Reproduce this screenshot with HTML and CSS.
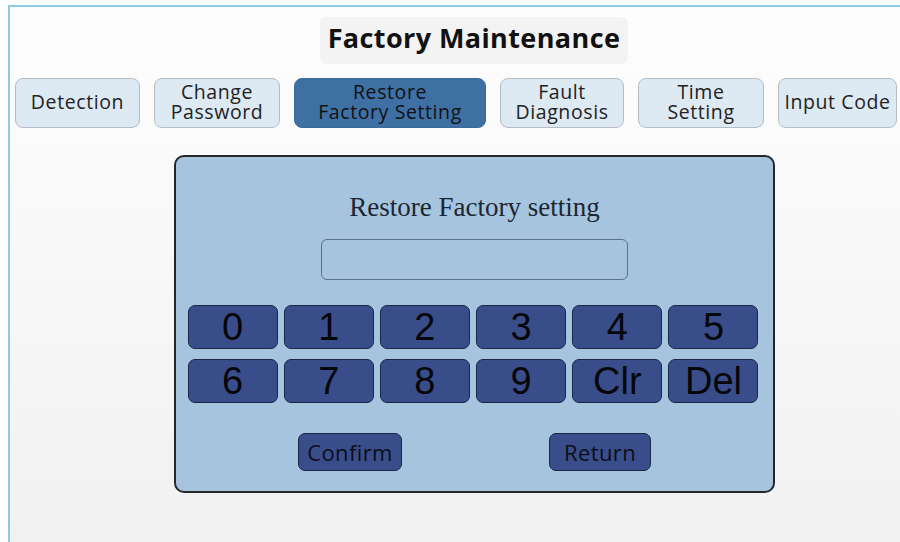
FILE: index.html
```html
<!DOCTYPE html>
<html>
	<head>
		<meta charset="UTF-8">
		<title>Factory Maintenance</title>
		<link rel="stylesheet" href="styles.css">
	</head>
	<body>
		<div class="frame">
			<div class="head">
				<h1 class="title">Factory Maintenance</h1>
			</div>
			<div class="tabs">
				<div class="tab w1">Detection</div>
				<div class="tab w2">Change<br>Password</div>
				<div class="tab w3 on">Restore<br>Factory Setting</div>
				<div class="tab w4">Fault<br>Diagnosis</div>
				<div class="tab w5">Time<br>Setting</div>
				<div class="tab w6">Input Code</div>
			</div>
			<div class="panel">
				<p class="ptitle">Restore Factory setting</p>
				<div class="field"></div>
				<div class="keys">
					<span class="key">0</span>
					<span class="key">1</span>
					<span class="key">2</span>
					<span class="key">3</span>
					<span class="key">4</span>
					<span class="key">5</span>
					<span class="key">6</span>
					<span class="key">7</span>
					<span class="key">8</span>
					<span class="key">9</span>
					<span class="key">Clr</span>
					<span class="key">Del</span>
				</div>
				<div class="acts">
					<span class="act confirm">Confirm</span>
					<span class="act ret">Return</span>
				</div>
			</div>
		</div>
	</body>
</html>
```

FILE: styles.css
```css
html,body{
	margin:0;
	padding:0;
	background:#fff;
}
.frame{
	margin:5px 0 0 8px;
	height:537px;
	box-sizing:border-box;
	border-left:2px solid #8ccbe2;
	border-top:2px solid #8ccbe2;
	background:linear-gradient(#fefefe,#f1f1f1);
	font-family:"Open Sans","DejaVu Sans",sans-serif;
	color:#222;
}
.head{
	display:flex;
	justify-content:center;
	padding:10px 0 0 38px;
}
.title{
	margin:0;
	width:308px;
	height:47px;
	line-height:42px;
	text-align:center;
	font-size:27px;
	letter-spacing:0.4px;
	font-weight:bold;
	color:#111;
	background:#f3f3f3;
	border-radius:6px;
}
.tabs{
	display:flex;
	gap:14px;
	margin:14px 0 0 5px;
}
.tab{
	height:50px;
	box-sizing:border-box;
	padding-bottom:3px;
	display:flex;
	align-items:center;
	justify-content:center;
	text-align:center;
	font-size:19.5px;
	letter-spacing:0.6px;
	line-height:20px;
	background:#dde9f3;
	border:1px solid #b3bcc4;
	border-radius:8px;
	white-space:nowrap;
}
.w1{width:125px;}
.w2{width:126px;}
.w3{width:192px;}
.w4{width:124px;}
.w5{width:126px;}
.w6{width:119px;}
.tab.on{
	background:#3f70a4;
	border-color:#3a6a9c;
	color:#111;
}
.panel{
	margin:27px 0 0 164px;
	width:601px;
	height:338px;
	box-sizing:border-box;
	background:#a7c4de;
	border:2px solid #23272d;
	border-radius:10px;
	padding:0 11px;
	display:flex;
	flex-direction:column;
	align-items:center;
}
.ptitle{
	margin:35px 0 0;
	font-family:"Liberation Serif","DejaVu Serif",serif;
	font-size:27px;
	line-height:31px;
	color:#1c2633;
}
.field{
	margin-top:16px;
	width:307px;
	height:41px;
	box-sizing:border-box;
	border:1px solid #5b6f89;
	border-radius:6px;
}
.keys{
	margin:25px 3px 0 0;
	display:grid;
	grid-template-columns:repeat(6,90px);
	grid-auto-rows:44px;
	gap:10px 6.2px;
}
.key{
	background:#3a4d8b;
	border:1px solid #1c2745;
	border-radius:7px;
	box-sizing:border-box;
	display:flex;
	align-items:center;
	justify-content:center;
	font-family:"Liberation Sans",Arial,sans-serif;
	font-size:38px;
	color:#050608;
}
.acts{
	margin-top:30px;
	display:flex;
	gap:147px;
}
.act{
	height:38px;
	box-sizing:border-box;
	display:flex;
	align-items:center;
	justify-content:center;
	background:#3a4d8b;
	border:1px solid #1c2745;
	border-radius:7px;
	font-size:22px;
	letter-spacing:0.4px;
	color:#0b0e18;
}
.confirm{width:104px;}
.ret{width:102px;}
```
